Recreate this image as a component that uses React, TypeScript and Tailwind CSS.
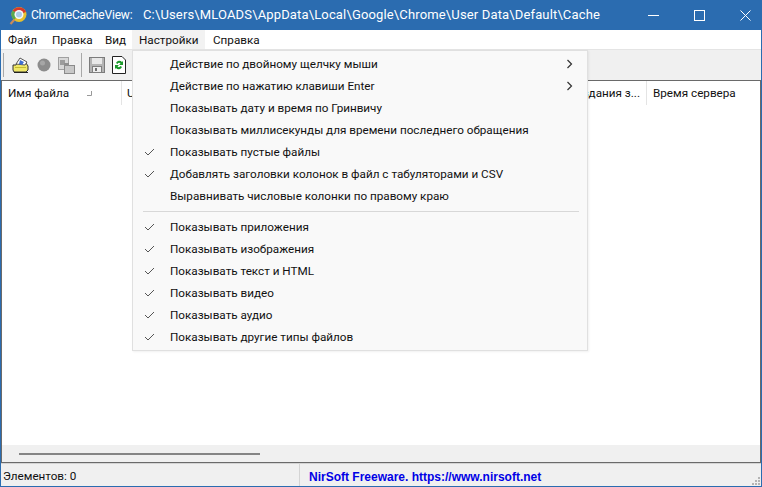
import React from 'react';

const menuTop = [
  { label: 'Действие по двойному щелчку мыши', arrow: true },
  { label: 'Действие по нажатию клавиши Enter', arrow: true },
  { label: 'Показывать дату и время по Гринвичу' },
  { label: 'Показывать миллисекунды для времени последнего обращения' },
  { label: 'Показывать пустые файлы', checked: true },
  { label: 'Добавлять заголовки колонок в файл с табуляторами и CSV', checked: true },
  { label: 'Выравнивать числовые колонки по правому краю' },
];

const menuBottom = [
  'Показывать приложения',
  'Показывать изображения',
  'Показывать текст и HTML',
  'Показывать видео',
  'Показывать аудио',
  'Показывать другие типы файлов',
];

type ItemProps = { label: string; checked?: boolean; arrow?: boolean };

const MenuItem: React.FC<ItemProps> = ({ label, checked, arrow }) => (
  <div className="h-[22px] flex items-center relative pl-[37px] pt-[1px] text-[11.7px] leading-none text-[#111] whitespace-nowrap">
    {checked && (
      <svg className="absolute left-[11px] top-[7px]" width="11" height="8" viewBox="0 0 11 8" fill="none" stroke="#555" strokeWidth="1">
        <path d="M1 4l3 3 6-6" />
      </svg>
    )}
    {label}
    {arrow && (
      <svg className="absolute left-[433px] top-[6px]" width="7" height="10" viewBox="0 0 7 10" fill="none" stroke="#333" strokeWidth="1.2">
        <path d="M1.500 1l4 4-4 4" />
      </svg>
    )}
  </div>
);

const AppIcon = () => (
  <svg width="18" height="19" viewBox="0 0 18 19">
    <circle cx="10" cy="8.500" r="7.500" fill="#e6c02e" />
    <path d="M3.500 5A7.500 7.500 0 0 1 17 6L10 8.500z" fill="#d5392b" />
    <path d="M3.500 4.500A7.500 7.500 0 0 0 5 14L10 8.500z" fill="#58a84f" />
    <circle cx="10" cy="8.500" r="4.500" fill="#f4f8fc" />
    <circle cx="10" cy="8.500" r="3" fill="#a9cbe8" />
    <path d="M1.500 18l4-4.500" stroke="#c98a5a" strokeWidth="2.200" />
  </svg>
);

const ToolbarIcons = () => (
  <div className="flex items-center h-full pl-[2px]">
    <div className="w-px h-[24px] bg-[#a8a8a8]" />
    <svg className="ml-[8px]" width="17" height="17" viewBox="0 0 17 17">
      <path d="M1 8h3l1-2h9l2 3v4l-2 2H2l-1-2z" fill="#f0e868" stroke="#333" />
      <path d="M4 7l4-6 7 4-2 3z" fill="#fff" stroke="#555" />
      <path d="M8 3l4 2-2 3-3-1z" fill="#3f6fd0" />
      <path d="M3 10h11v1H3z" fill="#c4bb30" />
      <path d="M2 15h14v1H2z" fill="#222" />
    </svg>
    <svg className="ml-[8px]" width="14" height="14" viewBox="0 0 14 14">
      <circle cx="7" cy="7" r="6.500" fill="#8c8c8c" />
      <circle cx="5.500" cy="5" r="2.500" fill="#a6a6a6" />
    </svg>
    <svg className="ml-[7px]" width="17" height="17" viewBox="0 0 17 17">
      <rect x="0.500" y="0.500" width="10" height="12" fill="#d8d8d8" stroke="#a0a0a0" />
      <rect x="2" y="3" width="5" height="5" fill="#9c9c9c" />
      <rect x="6.500" y="8.500" width="10" height="8" fill="#c8c8c8" stroke="#8a8a8a" />
      <rect x="6" y="6" width="5" height="3" fill="#8f8f8f" />
    </svg>
    <div className="ml-[6px] w-px h-[24px] bg-[#a8a8a8]" />
    <svg className="ml-[7px]" width="16" height="16" viewBox="0 0 16 16">
      <rect x="0.500" y="0.500" width="15" height="15" fill="#b4b4b4" stroke="#7c7c7c" />
      <rect x="3" y="1" width="10" height="6" fill="#e8e8e8" />
      <rect x="3.500" y="9.500" width="9" height="6" fill="#eeeeee" stroke="#808080" />
      <rect x="6" y="11" width="2" height="3" fill="#707070" />
    </svg>
    <svg className="ml-[7px]" width="14" height="18" viewBox="0 0 14 18">
      <path d="M0.500 0.500H10l3.500 3.500v13.500H0.500z" fill="#fff" stroke="#222" />
      <path d="M4 7a3.500 3.500 0 0 1 6-1l1-1v4H7l1.500-1.500A2 2 0 0 0 5.500 8z" fill="#1c9a2c" />
      <path d="M10 11a3.500 3.500 0 0 1-6 1l-1 1V9h4l-1.500 1.500A2 2 0 0 0 8.500 10z" fill="#1c9a2c" />
    </svg>
  </div>
);

export default function App() {
  return (
    <div className='w-[762px] h-[487px] relative overflow-hidden flex flex-col bg-[#2b6cb0] px-[1px] pb-[1px] font-["Roboto","Noto_Sans",sans-serif]'>
      <div className="h-[30px] shrink-0 flex items-center text-white pl-[8px]">
        <AppIcon />
        <span className="ml-[4px] text-[12px] tracking-[-0.2px] w-[102px] whitespace-nowrap">ChromeCacheView:</span>
        <span className="ml-[10px] text-[13px] tracking-[0.15px] whitespace-nowrap">C:\Users\MLOADS\AppData\Local\Google\Chrome\User Data\Default\Cache</span>
        <div className="ml-auto flex items-center pr-[10px]">
          <svg width="11" height="11" viewBox="0 0 11 11" stroke="#fff" fill="none"><path d="M0 5.500h11" /></svg>
          <svg className="ml-[35px]" width="11" height="11" viewBox="0 0 11 11" stroke="#fff" fill="none"><rect x="0.500" y="0.500" width="10" height="10" /></svg>
          <svg className="ml-[35px]" width="11" height="11" viewBox="0 0 11 11" stroke="#fff" fill="none"><path d="M0.500 0.500l10 10M10.500 0.500l-10 10" /></svg>
        </div>
      </div>

      <div className="h-[19px] shrink-0 bg-white flex items-stretch text-[11.7px] text-[#111] leading-none">
        <span className="flex items-center pt-[3px] pl-[7px] w-[51px]">Файл</span>
        <span className="flex items-center pt-[3px] w-[53px]">Правка</span>
        <span className="flex items-center pt-[3px] w-[27px]">Вид</span>
        <span className="flex items-center pt-[3px] pl-[7px] w-[73px] bg-[#f2f2f2]">Настройки</span>
        <span className="flex items-center pt-[3px] pl-[8px]">Справка</span>
      </div>

      <div className="h-[32px] shrink-0 bg-[#f0f0f0] border-t border-t-[#e4e4e4] border-b border-b-[#6a6a6a]">
        <ToolbarIcons />
      </div>

      <div className="flex-1 flex flex-col border-l border-r border-[#6a6a6a] min-h-0">
        <div className="h-[24px] shrink-0 bg-white flex items-stretch text-[11.7px] text-[#111] leading-none">
          <div className="w-[120px] flex items-center pl-[6px] pt-[1px] border-r border-[#e4e4e4] relative">
            Имя файла
            <svg className="absolute left-[85px] top-[10px]" width="5" height="5" viewBox="0 0 5 5" stroke="#999" fill="none"><path d="M4.500 0v4.500H0" /></svg>
          </div>
          <div className="flex items-center pl-[5px] pt-[1px]">URL</div>
          <div className="ml-auto flex items-center pt-[1px] pr-[6px] whitespace-nowrap">Время создания з...</div>
          <div className="w-[114px] flex items-center pl-[6px] pt-[1px] border-l border-[#e4e4e4]">Время сервера</div>
        </div>

        <div className="flex-1 bg-white" />

        <div className="h-[17px] shrink-0 bg-[#f0f0f0] flex items-center pl-[17px]">
          <div className="w-[241px] h-[2px] bg-[#858585]" />
        </div>
      </div>
      <div className="h-px shrink-0 bg-[#6a6a6a]" />
      <div className="h-[23px] shrink-0 bg-[#f0f0f0] border-t border-t-[#d4d4d4] flex items-stretch text-[11.7px] leading-none relative">
        <div className="w-[299px] flex items-center pl-[2px] pt-[3px] border-r border-[#d4d4d4] text-[#111]">Элементов: 0</div>
        <div className="flex items-center pl-[9px] pt-[3px] font-['Liberation_Sans',sans-serif] font-bold text-[12px] text-[#0000e6]">NirSoft Freeware. https://www.nirsoft.net</div>
        <svg className="absolute right-[1px] bottom-[1px]" width="9" height="9" viewBox="0 0 9 9" fill="#b4b4b4">
          <rect x="7" y="1" width="2" height="2" />
          <rect x="4" y="4" width="2" height="2" /><rect x="7" y="4" width="2" height="2" />
          <rect x="1" y="7" width="2" height="2" /><rect x="4" y="7" width="2" height="2" /><rect x="7" y="7" width="2" height="2" />
        </svg>
      </div>

      <div className="absolute left-[132px] top-[50px] w-[456px] bg-[#f9f9f9] border border-[#e0e0e0] pt-[2px] pb-[2px] shadow-[1px_1px_2px_rgba(0,0,0,0.06)]">
        {menuTop.map((m) => (
          <MenuItem key={m.label} {...m} />
        ))}
        <div className="h-[9px] flex items-center pl-[10px] pr-[8px]">
          <div className="w-full h-px bg-[#d8d8d8]" />
        </div>
        {menuBottom.map((label) => (
          <MenuItem key={label} label={label} checked />
        ))}
      </div>
    </div>
  );
}
